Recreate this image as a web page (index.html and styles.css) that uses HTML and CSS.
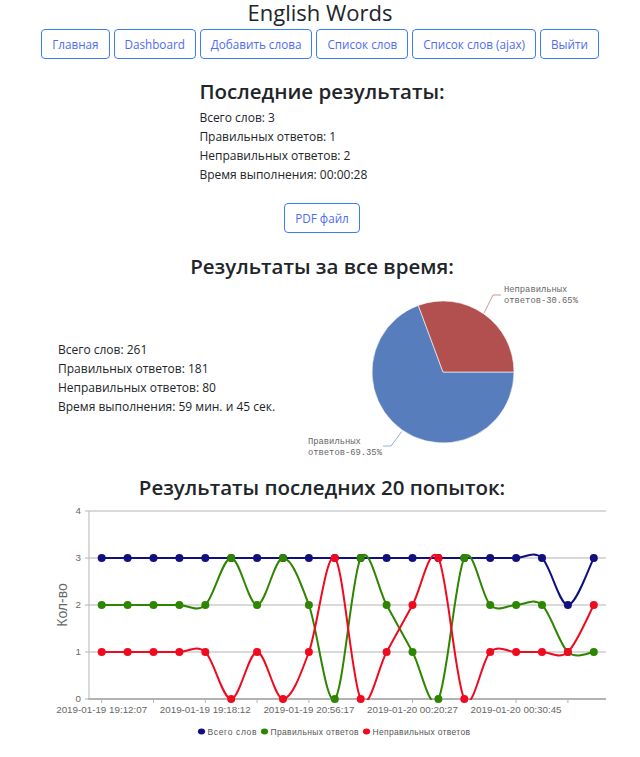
FILE: index.html
```html
<!DOCTYPE html>
<html lang="ru">
<head>
<meta charset="utf-8">
<title>English Words</title>
<link rel="stylesheet" href="styles.css">
</head>
<body>
<header class="site-header">
  <h1 class="site-title">English Words</h1>
  <nav class="nav">
    <a class="btn" href="#">Главная</a>
    <a class="btn" href="#">Dashboard</a>
    <a class="btn" href="#">Добавить слова</a>
    <a class="btn" href="#">Список слов</a>
    <a class="btn" href="#">Список слов (ajax)</a>
    <a class="btn" href="#">Выйти</a>
  </nav>
</header>
<main class="content">
  <section class="last">
    <div class="last-inner">
      <h2 class="section-title">Последние результаты:</h2>
      <p class="stat">Всего слов: 3</p>
      <p class="stat">Правильных ответов: 1</p>
      <p class="stat">Неправильных ответов: 2</p>
      <p class="stat">Время выполнения: 00:00:28</p>
    </div>
    <div class="pdf-wrap"><a class="btn" href="#">PDF файл</a></div>
  </section>

  <section class="alltime">
    <h2 class="section-title alltime-title">Результаты за все время:</h2>
    <div class="alltime-row">
      <div class="alltime-stats">
        <p class="stat">Всего слов: 261</p>
        <p class="stat">Правильных ответов: 181</p>
        <p class="stat">Неправильных ответов: 80</p>
        <p class="stat">Время выполнения: 59 мин. и 45 сек.</p>
      </div>
      <svg class="pie" width="300" height="176" viewBox="296 284 300 176" xmlns="http://www.w3.org/2000/svg">
        <path d="M443,372 L418.3,305.4 A71,71 0 1,0 514,372 Z" fill="#587dbc" stroke="#ffffff" stroke-width="0.6"/>
        <path d="M443,372 L514,372 A71,71 0 0,0 418.3,305.4 Z" fill="#b2504f" stroke="#ffffff" stroke-width="0.6"/>
        <polyline points="484,313 493,295 501,295" fill="none" stroke="#c27b7a" stroke-width="0.8"/>
        <polyline points="401.7,431.5 391,446 383,446" fill="none" stroke="#7e9acb" stroke-width="0.8"/>
        <g class="pie-label">
          <text x="504" y="292">Неправильных</text>
          <text x="504" y="302.5">ответов-30.65%</text>
          <text x="308" y="444">Правильных</text>
          <text x="308" y="454.5">ответов-69.35%</text>
        </g>
      </svg>
    </div>
  </section>

  <section class="history">
    <h2 class="section-title history-title">Результаты последних 20 попыток:</h2>
    <svg id="history-chart" class="line-chart" width="640" height="250" viewBox="0 500 640 250" xmlns="http://www.w3.org/2000/svg">
      <defs>
        <clipPath id="plot-clip"><rect x="89" y="505" width="518" height="195"/></clipPath>
      </defs>
      <g class="grid">
        <line x1="89" y1="511" x2="606" y2="511"/>
        <line x1="89" y1="558" x2="606" y2="558"/>
        <line x1="89" y1="605" x2="606" y2="605"/>
        <line x1="89" y1="652" x2="606" y2="652"/>
        <line x1="89" y1="511" x2="89" y2="699"/>
      </g>
      <line class="axis" x1="88" y1="699" x2="606" y2="699"/>
      <g class="ticks">
        <line x1="85" y1="511" x2="89" y2="511"/>
        <line x1="85" y1="558" x2="89" y2="558"/>
        <line x1="85" y1="605" x2="89" y2="605"/>
        <line x1="85" y1="652" x2="89" y2="652"/>
        <line x1="85" y1="699" x2="89" y2="699"/>
        <line x1="101.7" y1="699" x2="101.7" y2="703"/>
        <line x1="153.5" y1="699" x2="153.5" y2="703"/>
        <line x1="205.3" y1="699" x2="205.3" y2="703"/>
        <line x1="257.1" y1="699" x2="257.1" y2="703"/>
        <line x1="308.9" y1="699" x2="308.9" y2="703"/>
        <line x1="360.7" y1="699" x2="360.7" y2="703"/>
        <line x1="412.5" y1="699" x2="412.5" y2="703"/>
        <line x1="464.3" y1="699" x2="464.3" y2="703"/>
        <line x1="516.1" y1="699" x2="516.1" y2="703"/>
        <line x1="567.9" y1="699" x2="567.9" y2="703"/>
      </g>
      <g class="tick-label y-labels">
        <text x="81" y="514">4</text>
        <text x="81" y="561">3</text>
        <text x="81" y="608">2</text>
        <text x="81" y="655">1</text>
        <text x="81" y="702">0</text>
      </g>
      <g class="tick-label x-labels">
        <text x="101.7" y="712.5">2019-01-19 19:12:07</text>
        <text x="205.3" y="712.5">2019-01-19 19:18:12</text>
        <text x="308.9" y="712.5">2019-01-19 20:56:17</text>
        <text x="412.5" y="712.5">2019-01-20 00:20:27</text>
        <text x="516.1" y="712.5">2019-01-20 00:30:45</text>
      </g>
      <text class="axis-title" x="67" y="605" transform="rotate(-90 67 605)">Кол-во</text>
      <g id="series"></g>
      <g class="legend">
        <ellipse cx="201.5" cy="731.5" rx="3.6" ry="3" fill="#10107f"/>
        <text x="207.5" y="734.5" textLength="49" lengthAdjust="spacing">Всего слов</text>
        <ellipse cx="264.5" cy="731.5" rx="3.6" ry="3" fill="#2e8500"/>
        <text x="270.5" y="734.5" textLength="88" lengthAdjust="spacing">Правильных ответов</text>
        <ellipse cx="366.5" cy="731.5" rx="3.6" ry="3" fill="#ef0a1f"/>
        <text x="372.5" y="734.5" textLength="97.5" lengthAdjust="spacing">Неправильных ответов</text>
      </g>
    </svg>
  </section>
</main>
<script src="chart.js"></script>
</body>
</html>
```

FILE: styles.css
```css
* { box-sizing: border-box; }

body {
  margin: 0;
  font-family: "Open Sans", "Noto Sans", sans-serif;
  font-size: 12px;
  color: #212529;
  background: #ffffff;
}

.site-title {
  margin: 0;
  padding-top: 1px;
  text-align: center;
  font-size: 22px;
  line-height: 23px;
  font-weight: 500;
}

.nav {
  display: flex;
  justify-content: center;
  gap: 4px;
  margin-top: 5px;
}

.btn {
  display: inline-block;
  padding: 5px 10px;
  border: 1px solid #3b7df4;
  border-radius: 4px;
  color: #4f6cf2;
  text-decoration: none;
  font-size: 11.7px;
  line-height: 18px;
  white-space: nowrap;
}

.content {
  padding-left: 4px;
}

.section-title {
  margin: 0;
  font-size: 20.5px;
  line-height: 28px;
  font-weight: 600;
}

.last {
  display: flex;
  flex-direction: column;
  align-items: center;
  margin-top: 18px;
}

.last-inner {
  text-align: left;
}

.last-inner .section-title {
  margin-bottom: 3px;
}

.stat {
  margin: 0;
  line-height: 19px;
}

.pdf-wrap {
  margin-top: 19px;
}

.alltime-title {
  margin-top: 19px;
  text-align: center;
}

.alltime-row {
  display: flex;
  align-items: flex-start;
  margin-top: 4px;
  padding-left: 54px;
}

.alltime-stats {
  flex: none;
  width: 238px;
  margin-top: 56px;
}

.pie {
  display: block;
  flex: none;
}

.pie-label text {
  font-family: "Liberation Mono", monospace;
  font-size: 8.8px;
  fill: #666666;
}

.history-title {
  margin-top: 14px;
  text-align: center;
  line-height: 26px;
}

.line-chart {
  display: block;
  margin-left: -4px;
}

.grid line {
  stroke: #cccccc;
  stroke-width: 1.5;
}

.axis {
  stroke: #b3b3b3;
  stroke-width: 2;
}

.ticks line {
  stroke: #b3b3b3;
  stroke-width: 1;
}

.tick-label text {
  font-family: "Liberation Sans", Arial, sans-serif;
  font-size: 9.8px;
  fill: #666666;
}

.y-labels text {
  text-anchor: end;
}

.x-labels text {
  text-anchor: middle;
}

.axis-title {
  font-family: "Liberation Sans", Arial, sans-serif;
  font-size: 14px;
  fill: #666666;
  text-anchor: middle;
}

.legend text {
  font-family: "Liberation Sans", Arial, sans-serif;
  font-size: 8.5px;
  fill: #555555;
}

.series-line {
  fill: none;
  stroke-width: 2;
}
```

FILE: chart.js
```js
(function () {
  var NS = 'http://www.w3.org/2000/svg';
  var group = document.getElementById('series');
  var x0 = 101.7, dx = 25.9, y0 = 699, dy = 47;
  var series = [
    { color: '#10107f', data: [3,3,3,3,3,3,3,3,3,3,3,3,3,3,3,3,3,3,2,3] },
    { color: '#2e8500', data: [2,2,2,2,2,3,2,3,2,0,3,2,1,0,3,2,2,2,1,1] },
    { color: '#ef0a1f', data: [1,1,1,1,1,0,1,0,1,3,0,1,2,3,0,1,1,1,1,2] }
  ];

  function pt(i, v) { return [x0 + dx * i, y0 - dy * v]; }
  function f(n) { return n.toFixed(2); }

  series.forEach(function (s) {
    var pts = s.data.map(function (v, i) { return pt(i, v); });
    var d = 'M' + f(pts[0][0]) + ',' + f(pts[0][1]);
    for (var i = 0; i < pts.length - 1; i++) {
      var p0 = pts[i - 1] || pts[i];
      var p1 = pts[i];
      var p2 = pts[i + 1];
      var p3 = pts[i + 2] || pts[i + 1];
      var c1x = p1[0] + (p2[0] - p0[0]) / 6;
      var c1y = p1[1] + (p2[1] - p0[1]) / 6;
      var c2x = p2[0] - (p3[0] - p1[0]) / 6;
      var c2y = p2[1] - (p3[1] - p1[1]) / 6;
      d += ' C' + f(c1x) + ',' + f(c1y) + ' ' + f(c2x) + ',' + f(c2y) + ' ' + f(p2[0]) + ',' + f(p2[1]);
    }
    var path = document.createElementNS(NS, 'path');
    path.setAttribute('d', d);
    path.setAttribute('class', 'series-line');
    path.setAttribute('stroke', s.color);
    path.setAttribute('clip-path', 'url(#plot-clip)');
    group.appendChild(path);
    pts.forEach(function (p) {
      var c = document.createElementNS(NS, 'circle');
      c.setAttribute('cx', f(p[0]));
      c.setAttribute('cy', f(p[1]));
      c.setAttribute('r', '4');
      c.setAttribute('fill', s.color);
      group.appendChild(c);
    });
  });
})();
```
